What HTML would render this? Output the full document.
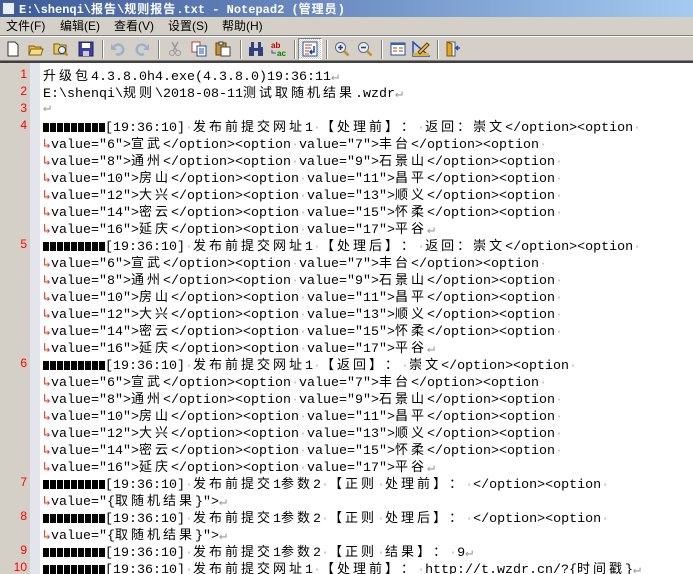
<!DOCTYPE html>
<html><head><meta charset="utf-8"><style>
*{margin:0;padding:0;box-sizing:border-box}
body{width:693px;height:574px;overflow:hidden;background:#d4d0c8;font-family:"Liberation Sans","Noto Sans CJK SC",sans-serif;position:relative;text-spacing-trim:space-all}
#title{position:absolute;left:0;top:0;width:693px;height:17px;background:linear-gradient(90deg,#3c5a98 0%,#6f8fc4 50%,#a6caf0 100%);color:#fff;font-weight:bold;font-size:12px;line-height:17px;padding-left:19px;font-family:"Liberation Mono","Noto Sans CJK SC",monospace;white-space:nowrap}
#title .ic{position:absolute;left:2px;top:2px;width:13px;height:13px;background:#e8eef8;border:1px solid #506080}
#menu{position:absolute;top:17px;left:0;height:18px;font-size:12px;line-height:18px;white-space:nowrap}
#menu span{position:absolute;top:0}
#tb{position:absolute;top:35px;left:0;width:693px;height:26px;border-top:1px solid #808080;border-bottom:1px solid #808080;box-shadow:inset 0 1px #fff}
.i{position:absolute;top:5px;width:16px;height:16px}
.sep{position:absolute;top:4px;width:2px;height:19px;border-left:1px solid #808080;border-right:1px solid #fff}
#ed{position:absolute;top:61px;left:0;width:693px;height:513px;background:#fff;border-top:2px solid #404040;overflow:hidden}
#g1{position:absolute;left:0;top:0;width:30px;height:100%;background:#d4d0c8}
#g2{position:absolute;left:30px;top:0;width:10px;height:100%;background:#e4e4ec}
.r{position:absolute;left:0;height:17px;width:693px;line-height:17px;font-family:"Liberation Mono",monospace;font-size:13.33px;white-space:pre;color:#000;margin-top:-1px}
.n{position:absolute;left:0;width:27px;text-align:right;color:#f00;font-family:"Liberation Sans",sans-serif;font-size:12px}
.t{position:absolute;left:43px}
b{font-weight:normal;font-family:"Noto Sans CJK SC",sans-serif;font-size:13px;letter-spacing:3px;text-spacing-trim:space-all;font-kerning:none;font-feature-settings:"halt" 0,"palt" 0,"chws" 0}
.w{color:#e04020}
.e{color:#999}
.d{color:#bbb}
.sq{display:inline-block;width:62px;height:9px;vertical-align:-1px;background:repeating-linear-gradient(90deg,#000 0 6px,#fff 6px 7px)}
</style></head><body>
<div id="title"><div class="ic"></div>E:\shenqi\<b style="font-weight:bold;letter-spacing:1px;font-size:12px">报告</b>\<b style="font-weight:bold;letter-spacing:1px;font-size:12px">规则报告</b>.txt - Notepad2 (<b style="font-weight:bold;letter-spacing:1px;font-size:12px">管理员</b>)</div>
<div id="menu"><span style="left:6px">文件(F)</span><span style="left:60px">编辑(E)</span><span style="left:114px">查看(V)</span><span style="left:168px">设置(S)</span><span style="left:222px">帮助(H)</span></div>
<div id="tb">
<svg class="i" style="left:5px" viewBox="0 0 16 16"><path d="M3 1h7l3 3v11H3z" fill="#fff" stroke="#333"/></svg>
<svg class="i" style="left:28px" viewBox="0 0 16 16"><path d="M1 5h5l1 1h6v8H1z" fill="#e8c050" stroke="#806010"/><path d="M3 8h12l-2 6H1z" fill="#f8dc80" stroke="#806010"/></svg>
<svg class="i" style="left:53px" viewBox="0 0 16 16"><path d="M1 3h5l1 1h6v9H1z" fill="#e8c860" stroke="#806010"/><circle cx="9" cy="9" r="3.5" fill="#dfefff" stroke="#444"/><path d="M11.5 11.5l3 3" stroke="#c08000" stroke-width="2"/></svg>
<svg class="i" style="left:78px" viewBox="0 0 16 16"><rect x="1" y="1" width="14" height="14" fill="#4040a0" stroke="#202060"/><rect x="4" y="2" width="8" height="5" fill="#fff"/><rect x="5" y="10" width="6" height="5" fill="#ccc"/></svg>
<div class="sep" style="left:102px"></div>
<svg class="i" style="left:110px" viewBox="0 0 16 16"><path d="M4 6a5 5 0 1 1 2 7" fill="none" stroke="#9ab0d0" stroke-width="2.5"/><path d="M1 3v6h6z" fill="#9ab0d0"/></svg>
<svg class="i" style="left:134px" viewBox="0 0 16 16"><path d="M12 6a5 5 0 1 0-2 7" fill="none" stroke="#9ab0d0" stroke-width="2.5"/><path d="M15 3v6H9z" fill="#9ab0d0"/></svg>
<div class="sep" style="left:158px"></div>
<svg class="i" style="left:167px" viewBox="0 0 16 16"><path d="M5 1l5 9M11 1L6 10" stroke="#999" stroke-width="1.5"/><circle cx="5" cy="12" r="2.5" fill="none" stroke="#999"/><circle cx="11" cy="12" r="2.5" fill="none" stroke="#999"/></svg>
<svg class="i" style="left:191px" viewBox="0 0 16 16"><rect x="1" y="1" width="8" height="10" fill="#fff" stroke="#c04020"/><rect x="6" y="5" width="9" height="10" fill="#fff" stroke="#2050a0"/><path d="M8 8h5M8 10h5M8 12h5" stroke="#2050a0"/></svg>
<svg class="i" style="left:215px" viewBox="0 0 16 16"><rect x="1" y="2" width="10" height="12" fill="#c89030" stroke="#604010"/><rect x="4" y="1" width="4" height="3" fill="#ddd" stroke="#444"/><rect x="6" y="6" width="9" height="9" fill="#fff" stroke="#444"/></svg>
<div class="sep" style="left:240px"></div>
<svg class="i" style="left:248px" viewBox="0 0 16 16"><rect x="1" y="6" width="5" height="9" fill="#304080"/><rect x="10" y="6" width="5" height="9" fill="#304080"/><rect x="3" y="1" width="3" height="6" fill="#304080"/><rect x="10" y="1" width="3" height="6" fill="#304080"/><rect x="6" y="7" width="4" height="3" fill="#304080"/></svg>
<svg class="i" style="left:270px;width:18px" viewBox="0 0 18 16"><text x="1" y="7" font-size="8" fill="#c00000" font-family="Liberation Sans" font-weight="bold">ab</text><text x="7" y="15" font-size="8" fill="#008000" font-family="Liberation Sans" font-weight="bold">ac</text><path d="M2 9v3h4" stroke="#3050a0" fill="none"/></svg>
<div class="sep" style="left:294px"></div>
<div style="position:absolute;left:298px;top:2px;width:24px;height:22px;border:1px solid;border-color:#808080 #fff #fff #808080;background:repeating-conic-gradient(#fff 0 25%,#d4d0c8 0 50%) 0 0/2px 2px"></div>
<svg class="i" style="left:302px" viewBox="0 0 16 16"><rect x="1" y="1" width="14" height="14" fill="#fff" stroke="#2050a0"/><path d="M3 4h7M3 7h6M3 10h4M3 13h4" stroke="#c04020"/><path d="M12 5v6H8m2-2l-2 2 2 2" stroke="#2040a0" fill="none" stroke-width="1.5"/></svg>
<div class="sep" style="left:326px"></div>
<svg class="i" style="left:334px" viewBox="0 0 16 16"><circle cx="6.5" cy="6.5" r="5" fill="#e8f0f8" stroke="#667"/><path d="M4 6.5h5M6.5 4v5" stroke="#2040a0" stroke-width="1.6"/><path d="M10 10l4.5 4.5" stroke="#c09020" stroke-width="2.5"/></svg>
<svg class="i" style="left:357px" viewBox="0 0 16 16"><circle cx="6.5" cy="6.5" r="5" fill="#e8f0f8" stroke="#667"/><path d="M4 6.5h5" stroke="#2040a0" stroke-width="1.6"/><path d="M10 10l4.5 4.5" stroke="#c09020" stroke-width="2.5"/></svg>
<div class="sep" style="left:381px"></div>
<svg class="i" style="left:390px" viewBox="0 0 16 16"><rect x="1" y="2" width="14" height="12" fill="#fff" stroke="#2050a0"/><rect x="1" y="2" width="14" height="2" fill="#3060c0"/><path d="M3 7h4M9 7h4M3 10h4M9 10h4" stroke="#c04020"/></svg>
<svg class="i" style="left:412px;width:18px" viewBox="0 0 18 16"><path d="M1 1v14h16z" fill="none" stroke="#2050c0" stroke-width="1.5"/><rect x="1" y="12" width="16" height="3" fill="#e0b030"/><path d="M6 11l9-9 2 2-9 9z" fill="#f0c040" stroke="#604010"/></svg>
<div class="sep" style="left:437px"></div>
<svg class="i" style="left:445px" viewBox="0 0 16 16"><rect x="2" y="1" width="8" height="14" fill="#fff" stroke="#555"/><path d="M2 1l5 2v12l-5-0z" fill="#e0a820" stroke="#805010"/><path d="M15 7h-4m2-2l-2 2 2 2" stroke="#2050d0" stroke-width="1.6" fill="none"/></svg>
</div>
<div id="ed"><div id="g1"></div><div id="g2"></div>
<div class="r" style="top:4px"><span class="n">1</span><span class="t"><b>升级包</b>4.3.8.0h4.exe(4.3.8.0)19:36:11<span class="e">↵</span></span></div>
<div class="r" style="top:21px"><span class="n">2</span><span class="t">E:\shenqi\<b>规则</b>\2018-08-11<b>测试取随机结果</b>.wzdr<span class="e">↵</span></span></div>
<div class="r" style="top:38px"><span class="n">3</span><span class="t"><span class="e">↵</span></span></div>

<div class="r" style="top:55px"><span class="n">4</span><span class="t"><span class="sq"></span>[19:36:10]<span class="d">·</span><b>发布前提交网址</b>1<span class="d">·</span><b>【</b><b>处理前</b><b>】</b><b>：</b><span class="d">·</span><b>返回</b><b>：</b><b>崇文</b>&lt;/option&gt;&lt;option<span class="d">·</span></span></div>
<div class="r" style="top:72px"><span class="t"><span class="w">↳</span>value="6"&gt;<b>宣武</b>&lt;/option&gt;&lt;option<span class="d">·</span>value="7"&gt;<b>丰台</b>&lt;/option&gt;&lt;option<span class="d">·</span></span></div>
<div class="r" style="top:89px"><span class="t"><span class="w">↳</span>value="8"&gt;<b>通州</b>&lt;/option&gt;&lt;option<span class="d">·</span>value="9"&gt;<b>石景山</b>&lt;/option&gt;&lt;option<span class="d">·</span></span></div>
<div class="r" style="top:106px"><span class="t"><span class="w">↳</span>value="10"&gt;<b>房山</b>&lt;/option&gt;&lt;option<span class="d">·</span>value="11"&gt;<b>昌平</b>&lt;/option&gt;&lt;option<span class="d">·</span></span></div>
<div class="r" style="top:123px"><span class="t"><span class="w">↳</span>value="12"&gt;<b>大兴</b>&lt;/option&gt;&lt;option<span class="d">·</span>value="13"&gt;<b>顺义</b>&lt;/option&gt;&lt;option<span class="d">·</span></span></div>
<div class="r" style="top:140px"><span class="t"><span class="w">↳</span>value="14"&gt;<b>密云</b>&lt;/option&gt;&lt;option<span class="d">·</span>value="15"&gt;<b>怀柔</b>&lt;/option&gt;&lt;option<span class="d">·</span></span></div>
<div class="r" style="top:157px"><span class="t"><span class="w">↳</span>value="16"&gt;<b>延庆</b>&lt;/option&gt;&lt;option<span class="d">·</span>value="17"&gt;<b>平谷</b><span class="e">↵</span></span></div>

<div class="r" style="top:174px"><span class="n">5</span><span class="t"><span class="sq"></span>[19:36:10]<span class="d">·</span><b>发布前提交网址</b>1<span class="d">·</span><b>【</b><b>处理后</b><b>】</b><b>：</b><span class="d">·</span><b>返回</b><b>：</b><b>崇文</b>&lt;/option&gt;&lt;option<span class="d">·</span></span></div>
<div class="r" style="top:191px"><span class="t"><span class="w">↳</span>value="6"&gt;<b>宣武</b>&lt;/option&gt;&lt;option<span class="d">·</span>value="7"&gt;<b>丰台</b>&lt;/option&gt;&lt;option<span class="d">·</span></span></div>
<div class="r" style="top:208px"><span class="t"><span class="w">↳</span>value="8"&gt;<b>通州</b>&lt;/option&gt;&lt;option<span class="d">·</span>value="9"&gt;<b>石景山</b>&lt;/option&gt;&lt;option<span class="d">·</span></span></div>
<div class="r" style="top:225px"><span class="t"><span class="w">↳</span>value="10"&gt;<b>房山</b>&lt;/option&gt;&lt;option<span class="d">·</span>value="11"&gt;<b>昌平</b>&lt;/option&gt;&lt;option<span class="d">·</span></span></div>
<div class="r" style="top:242px"><span class="t"><span class="w">↳</span>value="12"&gt;<b>大兴</b>&lt;/option&gt;&lt;option<span class="d">·</span>value="13"&gt;<b>顺义</b>&lt;/option&gt;&lt;option<span class="d">·</span></span></div>
<div class="r" style="top:259px"><span class="t"><span class="w">↳</span>value="14"&gt;<b>密云</b>&lt;/option&gt;&lt;option<span class="d">·</span>value="15"&gt;<b>怀柔</b>&lt;/option&gt;&lt;option<span class="d">·</span></span></div>
<div class="r" style="top:276px"><span class="t"><span class="w">↳</span>value="16"&gt;<b>延庆</b>&lt;/option&gt;&lt;option<span class="d">·</span>value="17"&gt;<b>平谷</b><span class="e">↵</span></span></div>

<div class="r" style="top:293px"><span class="n">6</span><span class="t"><span class="sq"></span>[19:36:10]<span class="d">·</span><b>发布前提交网址</b>1<span class="d">·</span><b>【</b><b>返回</b><b>】</b><b>：</b><span class="d">·</span><b>崇文</b>&lt;/option&gt;&lt;option<span class="d">·</span></span></div>
<div class="r" style="top:310px"><span class="t"><span class="w">↳</span>value="6"&gt;<b>宣武</b>&lt;/option&gt;&lt;option<span class="d">·</span>value="7"&gt;<b>丰台</b>&lt;/option&gt;&lt;option<span class="d">·</span></span></div>
<div class="r" style="top:327px"><span class="t"><span class="w">↳</span>value="8"&gt;<b>通州</b>&lt;/option&gt;&lt;option<span class="d">·</span>value="9"&gt;<b>石景山</b>&lt;/option&gt;&lt;option<span class="d">·</span></span></div>
<div class="r" style="top:344px"><span class="t"><span class="w">↳</span>value="10"&gt;<b>房山</b>&lt;/option&gt;&lt;option<span class="d">·</span>value="11"&gt;<b>昌平</b>&lt;/option&gt;&lt;option<span class="d">·</span></span></div>
<div class="r" style="top:361px"><span class="t"><span class="w">↳</span>value="12"&gt;<b>大兴</b>&lt;/option&gt;&lt;option<span class="d">·</span>value="13"&gt;<b>顺义</b>&lt;/option&gt;&lt;option<span class="d">·</span></span></div>
<div class="r" style="top:378px"><span class="t"><span class="w">↳</span>value="14"&gt;<b>密云</b>&lt;/option&gt;&lt;option<span class="d">·</span>value="15"&gt;<b>怀柔</b>&lt;/option&gt;&lt;option<span class="d">·</span></span></div>
<div class="r" style="top:395px"><span class="t"><span class="w">↳</span>value="16"&gt;<b>延庆</b>&lt;/option&gt;&lt;option<span class="d">·</span>value="17"&gt;<b>平谷</b><span class="e">↵</span></span></div>

<div class="r" style="top:412px"><span class="n">7</span><span class="t"><span class="sq"></span>[19:36:10]<span class="d">·</span><b>发布前提交</b>1<b>参数</b>2<span class="d">·</span><b>【</b><b>正则</b><span class="d">·</span><b>处理前</b><b>】</b><b>：</b><span class="d">·</span>&lt;/option&gt;&lt;option<span class="d">·</span></span></div>
<div class="r" style="top:429px"><span class="t"><span class="w">↳</span>value="{<b>取随机结果</b>}"&gt;<span class="e">↵</span></span></div>
<div class="r" style="top:446px"><span class="n">8</span><span class="t"><span class="sq"></span>[19:36:10]<span class="d">·</span><b>发布前提交</b>1<b>参数</b>2<span class="d">·</span><b>【</b><b>正则</b><span class="d">·</span><b>处理后</b><b>】</b><b>：</b><span class="d">·</span>&lt;/option&gt;&lt;option<span class="d">·</span></span></div>
<div class="r" style="top:463px"><span class="t"><span class="w">↳</span>value="{<b>取随机结果</b>}"&gt;<span class="e">↵</span></span></div>
<div class="r" style="top:480px"><span class="n">9</span><span class="t"><span class="sq"></span>[19:36:10]<span class="d">·</span><b>发布前提交</b>1<b>参数</b>2<span class="d">·</span><b>【</b><b>正则</b><span class="d">·</span><b>结果</b><b>】</b><b>：</b><span class="d">·</span>9<span class="e">↵</span></span></div>
<div class="r" style="top:497px"><span class="n">10</span><span class="t"><span class="sq"></span>[19:36:10]<span class="d">·</span><b>发布前提交网址</b>1<span class="d">·</span><b>【</b><b>处理前</b><b>】</b><b>：</b><span class="d">·</span>http://t.wzdr.cn/?{<b>时间戳</b>}<span class="e">↵</span></span></div>
</div>
</body></html>
